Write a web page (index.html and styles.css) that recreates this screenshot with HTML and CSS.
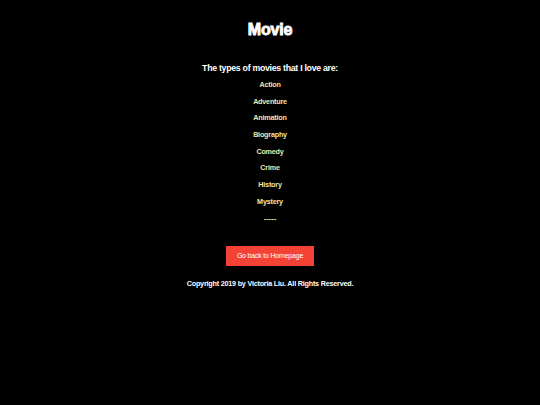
FILE: index.html
```html
<!DOCTYPE html>
<html>
<head>
<meta charset="utf-8">
<link rel="stylesheet" href="styles.css">
</head>
<body>
<main class="page">
  <h1 class="title">Movie</h1>
  <p class="intro">The types of movies that I love are:</p>
  <ul class="genres">
    <li>Action</li>
    <li>Adventure</li>
    <li>Animation</li>
    <li>Biography</li>
    <li>Comedy</li>
    <li>Crime</li>
    <li>History</li>
    <li>Mystery</li>
    <li class="dash">-----</li>
  </ul>
  <a class="back" href="#">Go back to Homepage</a>
  <p class="copy">Copyright 2019 by Victoria Liu. All Rights Reserved.</p>
</main>
</body>
</html>
```
FILE: styles.css
```css
html, body { margin: 0; padding: 0; background: #000; height: 100%; }
body { font-family: "Liberation Sans", Arial, sans-serif; color: #fff; }
.page { display: flex; flex-direction: column; align-items: center; padding-top: 21px; }
.title { margin: 0; font-size: 16px; font-weight: 700; line-height: 18px; -webkit-text-stroke: 0.9px #fff; letter-spacing: -0.2px; }
.intro { margin: 23px 0 0; font-size: 8.8px; font-weight: 700; line-height: 12px; letter-spacing: -0.3px; }
.genres { list-style: none; margin: 6px 0 0; padding: 0; display: flex; flex-direction: column; align-items: center; gap: 6.7px; }
.genres li { font-size: 7.2px; font-weight: 700; line-height: 10px; color: #eee8aa; letter-spacing: -0.2px; }
.genres .dash { letter-spacing: 0; font-size: 7.5px; }
.back { margin-top: 22px; background: #f44336; color: #fff; text-decoration: none; font-size: 7px; letter-spacing: -0.2px; width: 88px; height: 20px; display: flex; align-items: center; justify-content: center; }
.copy { margin: 13px 0 0; font-size: 7.2px; font-weight: 700; line-height: 10px; letter-spacing: -0.2px; }
```
